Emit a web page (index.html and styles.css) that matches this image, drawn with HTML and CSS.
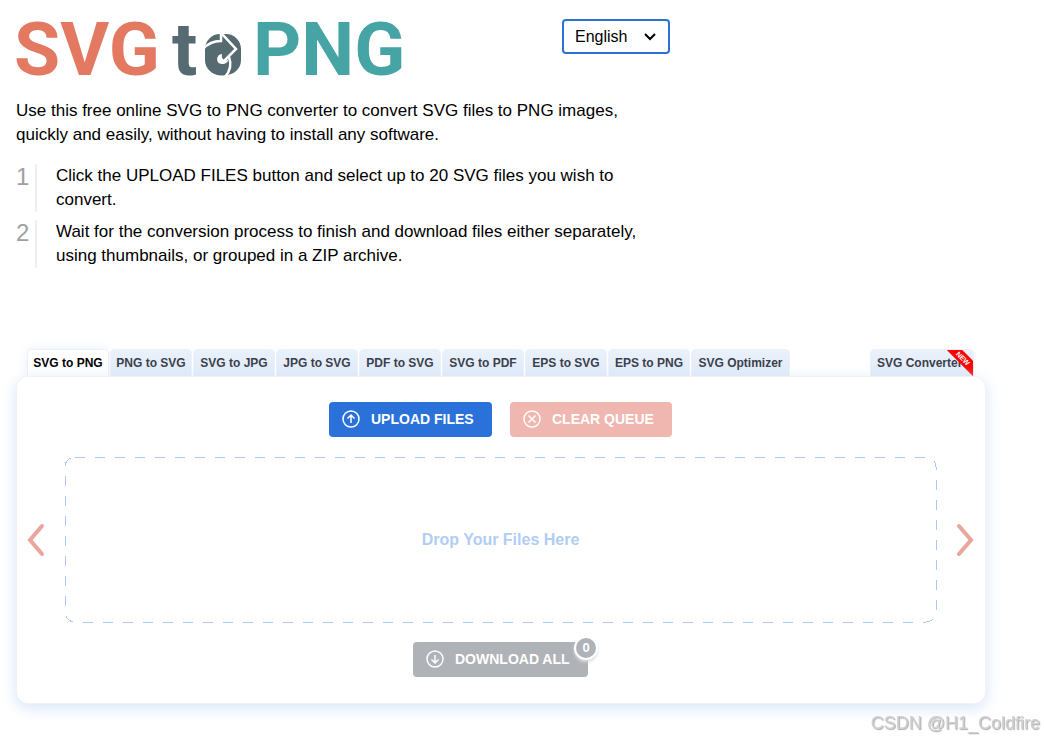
FILE: index.html
```html
<!DOCTYPE html>
<html lang="en">
<head>
  <meta charset="UTF-8">
  <meta name="viewport" content="width=device-width, initial-scale=1.0">
  <title>SVG to PNG</title>
  <link rel="stylesheet" href="styles.css">
</head>
<body>
  <main class="page">
    <section class="intro">
      <header class="header">
        <a href="#" class="logo">
          <svg viewBox="0 0 388 60" role="img" aria-label="SVG to PNG">
            <text x="-2" y="56" class="logo-svg">SVG</text>
            <text x="156" y="56" class="logo-to">t<tspan x="188" class="logo-o">o</tspan></text>
            <text x="237" y="56" class="logo-png">PNG</text>
            <!-- Arrow through the letter o -->
            <rect x="189" y="15" width="36" height="41" rx="15" class="logo-disc"/>
            <path d="M187 30Q194 22 205 22V14L220 30L208 42" class="logo-arrow"/>
            <path d="M206 35C200 35 199 45 206 45C210 45 212 43 212 41C208 42 205 40 206 35Z" class="logo-swirl"/>
            <path d="M213 38Q217 49 209 58" class="logo-arrow"/>
          </svg>
        </a>
        <select class="language" aria-label="Language">
          <option>English</option>
        </select>
      </header>
      <p class="lead">Use this free online SVG to PNG converter to convert SVG files to PNG images, quickly and easily, without having to install any software.</p>
      <ol class="steps">
        <li><span>Click the UPLOAD FILES button and select up to 20 SVG files you wish to convert.</span></li>
        <li><span>Wait for the conversion process to finish and download files either separately, using thumbnails, or grouped in a ZIP archive.</span></li>
      </ol>
    </section>

    <nav class="tabs">
      <a href="#" class="tab active">SVG to PNG</a>
      <a href="#" class="tab">PNG to SVG</a>
      <a href="#" class="tab">SVG to JPG</a>
      <a href="#" class="tab">JPG to SVG</a>
      <a href="#" class="tab">PDF to SVG</a>
      <a href="#" class="tab">SVG to PDF</a>
      <a href="#" class="tab">EPS to SVG</a>
      <a href="#" class="tab">EPS to PNG</a>
      <a href="#" class="tab tab-wide">SVG Optimizer</a>
      <a href="#" class="tab tab-new">SVG Converter<span class="ribbon">NEW</span></a>
    </nav>

    <section class="panel">
      <div class="actions">
        <button type="button" class="btn btn-upload">
          <svg class="icon" viewBox="0 0 18 18"><circle cx="9" cy="9" r="8"/><path d="M9 13V5M5.500 8.500 9 5l3.500 3.500"/></svg>
          UPLOAD FILES
        </button>
        <button type="button" class="btn btn-clear">
          <svg class="icon" viewBox="0 0 18 18"><circle cx="9" cy="9" r="8"/><path d="M5.500 5.500l7 7M12.500 5.500l-7 7"/></svg>
          CLEAR QUEUE
        </button>
      </div>
      <div class="queue">
        <button type="button" class="arrow" aria-label="Previous">
          <svg viewBox="0 0 18 34"><path d="M15 3 3 17l12 14"/></svg>
        </button>
        <div class="dropzone">
          <svg class="dashes"><rect x="0" y="0" width="100%" height="100%" rx="10"/></svg>
          Drop Your Files Here
        </div>
        <button type="button" class="arrow" aria-label="Next">
          <svg viewBox="0 0 18 34"><path d="M3 3l12 14L3 31"/></svg>
        </button>
      </div>
      <div class="actions">
        <button type="button" class="btn btn-download">
          <svg class="icon" viewBox="0 0 18 18"><circle cx="9" cy="9" r="8"/><path d="M9 5v8M5.500 9.500 9 13l3.500-3.500"/></svg>
          DOWNLOAD ALL
          <span class="badge">0</span>
        </button>
      </div>
    </section>
  </main>
  <div class="watermark">CSDN @H1_Coldfire</div>
</body>
</html>
```

FILE: styles.css
```css
*,
*::before {
  box-sizing: border-box;
}

body {
  margin: 0;
  background: #fff;
  color: #000;
  font-family: "Liberation Sans", Arial, sans-serif;
  font-size: 17px;
  line-height: 24px;
}

.page {
  max-width: 1002px;
  padding: 19px 16px 36px;
}

.intro {
  max-width: 654px;
}

.header {
  display: flex;
  justify-content: space-between;
  align-items: flex-start;
  margin-bottom: 20px;
}

.logo svg {
  display: block;
  width: 388px;
  height: 60px;
  overflow: visible;
}

.logo text {
  font-family: Roboto, sans-serif;
  font-weight: 700;
  font-size: 75px;
}

.logo-svg {
  fill: #e47962;
}

.logo-to,
.logo-disc {
  fill: #566a72;
}

.logo-o {
  font-size: 64px;
}

.logo-png {
  fill: #47a4a5;
}

.logo-arrow {
  fill: none;
  stroke: #fff;
  stroke-width: 2.5;
}

.logo-swirl {
  fill: #fff;
}

.language {
  appearance: none;
  width: 108px;
  height: 35px;
  padding: 0 11px;
  border: 2px solid #2a72da;
  border-radius: 4px;
  background: url("data:image/svg+xml,%3Csvg xmlns='http://www.w3.org/2000/svg' width='12' height='8' fill='none' stroke='%23000' stroke-width='2'%3E%3Cpath d='M1 1l5 5 5-5'/%3E%3C/svg%3E") no-repeat right 12px center #fff;
  color: #000;
  font-family: inherit;
  font-size: 16px;
}

.lead {
  margin: 0 0 17px;
}

.steps {
  margin: 0;
  padding: 0;
  list-style: none;
  counter-reset: step;
}

.steps li {
  display: flex;
  margin-bottom: 8px;
  counter-increment: step;
}

.steps li::before {
  content: counter(step);
  flex: 0 0 21px;
  border-right: 2px solid #eee;
  margin-right: 19px;
  color: #a0a0a5;
  font-size: 24px;
  line-height: 26px;
}

.tabs {
  display: flex;
  gap: 1px;
  margin: 81px 12px 0 11px;
}

.tab {
  position: relative;
  flex: 0 1 82px;
  height: 27px;
  border: 1px solid #eef1f6;
  border-bottom: 0;
  border-radius: 5px 5px 0 0;
  background: linear-gradient(#e9f1fb, #e0eaf8);
  color: #3a3e4a;
  font-size: 12px;
  font-weight: 700;
  line-height: 26px;
  text-align: center;
  text-decoration: none;
  white-space: nowrap;
}

.tab.active {
  background: #fff;
  color: #000;
  box-shadow: 0 0 12px #e6effb;
}

.tab-wide {
  flex-basis: 99px;
}

.tab-new {
  flex-basis: 104px;
  margin-left: auto;
  overflow: hidden;
  text-align: left;
  padding-left: 6px;
}

.ribbon {
  position: absolute;
  top: 3px;
  right: -16px;
  width: 52px;
  background: #f00;
  color: #fff;
  font-size: 7px;
  font-weight: 700;
  line-height: 11px;
  text-align: center;
  transform: rotate(45deg);
}

.panel {
  position: relative;
  padding: 25px 11px 26px 10px;
  border: 1px solid #f0f2f5;
  border-radius: 12px;
  background: #fff;
  box-shadow: 0 4px 16px #d6e4f8;
}

.actions {
  display: flex;
  justify-content: center;
  gap: 18px;
}

.btn {
  position: relative;
  display: flex;
  align-items: center;
  gap: 11px;
  height: 35px;
  padding: 0 14px 1px 13px;
  border: 0;
  border-radius: 4px;
  color: #fff;
  font-family: inherit;
  font-size: 14px;
  font-weight: 700;
  white-space: nowrap;
}

.btn-upload {
  width: 163px;
  background: #2a72da;
}

.btn-clear {
  width: 162px;
  background: #efb7b0;
}

.btn-download {
  width: 175px;
  background: #afb2b7;
}

.icon {
  width: 18px;
  height: 18px;
  fill: none;
  stroke: #fff;
  stroke-width: 1.5;
}

.badge {
  position: absolute;
  top: -6px;
  right: -10px;
  width: 24px;
  height: 24px;
  border: 2px solid #fff;
  border-radius: 50%;
  background: #afb2b7;
  box-shadow: 0 2px 3px #ddd;
  font-size: 13px;
  line-height: 20px;
  text-align: center;
}

.queue {
  display: flex;
  align-items: center;
  gap: 20px;
  margin: 20px 0;
}

.arrow {
  padding: 0;
  border: 0;
  background: none;
}

.arrow svg {
  display: block;
  width: 18px;
  height: 34px;
  fill: none;
  stroke: #eaa59c;
  stroke-width: 4;
  stroke-linecap: round;
}

.dropzone {
  position: relative;
  flex: 1;
  display: flex;
  align-items: center;
  justify-content: center;
  height: 165px;
  color: #b1cdf3;
  font-size: 16px;
  font-weight: 700;
}

.dashes {
  position: absolute;
  inset: 0;
  width: 100%;
  height: 100%;
  overflow: visible;
}

.dashes rect {
  fill: none;
  stroke: #aac8f4;
  stroke-dasharray: 10;
  shape-rendering: crispEdges;
}

.watermark {
  position: fixed;
  right: 4px;
  bottom: 6px;
  color: #d0d0d0;
  font-size: 18px;
  text-shadow: 1px 1px 1px #aaa;
}
```
